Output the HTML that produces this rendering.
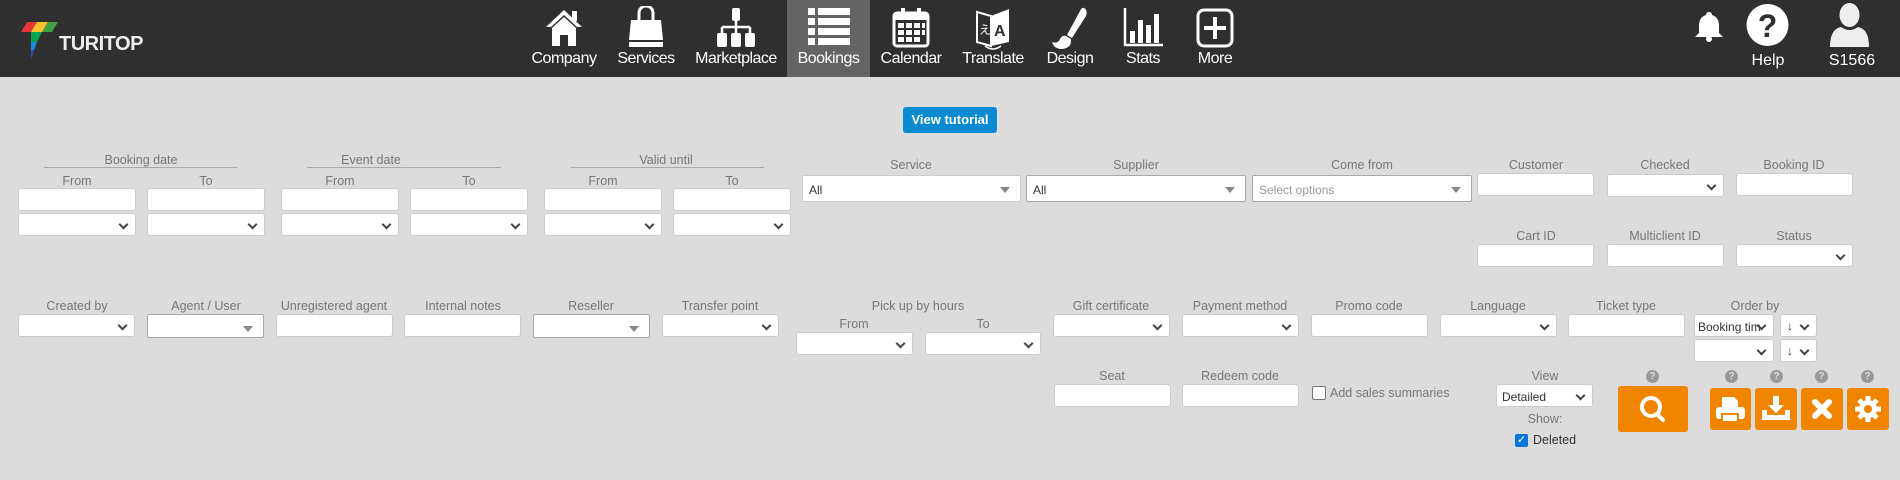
<!DOCTYPE html>
<html><head><meta charset="utf-8"><style>
*{margin:0;padding:0;box-sizing:border-box}
body{width:1900px;height:480px;background:#dcdcdc;font-family:"Liberation Sans",Arial,sans-serif;position:relative;overflow:hidden}
.nav{position:absolute;left:0;top:0;width:1900px;height:77px;background:#2f2f2f}
.ni{position:absolute;top:0;height:77px;color:#fff;font-size:16px;text-align:center}
.ni span{position:absolute;left:0;right:0;top:50px;letter-spacing:-0.5px}
.ni svg{position:absolute;top:6px;left:50%;transform:translateX(-50%)}
.a{position:absolute}
.lb{position:absolute;font-size:12.5px;color:#777;text-align:center;white-space:nowrap;transform:translateX(-50%)}
.in{position:absolute;background:#fff;border:1px solid #ccc;border-radius:3px;height:23px}
.se{position:absolute;background:#fff;border:1px solid #ccc;border-radius:3px;height:23px}
.se:after{content:"";position:absolute;right:8px;top:7px;width:5px;height:5px;border-right:2px solid #444;border-bottom:2px solid #444;transform:rotate(45deg)}
.ch{position:absolute;background:#fff;border:1px solid #aaa;border-radius:2px;height:27px;font-size:12px;color:#333;padding:7px 0 0 6px}
.ch:after{content:"";position:absolute;right:10px;top:11px;border:5px solid transparent;border-top:6px solid #888}
.ob{position:absolute;background:#f28500;border-radius:3px}
.q{position:absolute;width:13px;height:13px;border-radius:50%;background:#999;color:#ddd;font-size:10px;font-weight:bold;text-align:center;line-height:13px}
</style></head><body>
<div class="nav">
 <svg class="a" style="left:21px;top:22px" width="40" height="40" viewBox="0 0 40 40">
  <polygon points="6,0 16,0 10,10 0,10" fill="#e53935"/>
  <polygon points="16,0 27,0 21,10 10,10" fill="#fbc02d"/>
  <polygon points="27,0 37,0 31,10 21,10" fill="#43a047"/>
  <polygon points="10,10 21,10 16,20 10,20" fill="#00a651"/>
  <polygon points="10,20 16,20 13,28 10,28" fill="#1e88e5"/>
  <polygon points="10,28 13,28 10,38" fill="#3949ab"/>
 </svg>
 <div class="a" style="left:59px;top:33px;color:#eee;font-weight:bold;font-size:20px;letter-spacing:-0.5px">TURITOP</div>

 <div class="ni" style="left:527px;width:74px"><svg width="40" height="40" viewBox="0 0 40 40"><path d="M20 4 L2 21 L7 21 L20 9 L33 21 L38 21 Z" fill="#fff"/><rect x="28" y="5" width="5" height="10" fill="#fff"/><path d="M8 22 L20 11 L32 22 L32 40 L24 40 L24 29 L16 29 L16 40 L8 40Z" fill="#fff"/></svg><span>Company</span></div>
 <div class="ni" style="left:612px;width:68px"><svg width="40" height="42" viewBox="0 0 40 42"><path d="M13 14 V7 a7 7 0 0 1 14 0 V14" stroke="#fff" stroke-width="3" fill="none"/><path d="M5 14 H35 L37 34 H3Z" fill="#fff"/><rect x="3" y="36" width="34" height="5" fill="#fff"/></svg><span>Services</span></div>
 <div class="ni" style="left:690px;width:92px"><svg width="40" height="42" viewBox="0 0 40 42"><rect x="16" y="2" width="8" height="13" rx="2" fill="#fff"/><path d="M20 15V21M6 21H34M6 21V27M20 21V27M34 21V27" stroke="#fff" stroke-width="2.5" fill="none"/><rect x="1" y="27" width="10" height="14" rx="2" fill="#fff"/><rect x="15" y="27" width="10" height="14" rx="2" fill="#fff"/><rect x="29" y="27" width="10" height="14" rx="2" fill="#fff"/></svg><span>Marketplace</span></div>
 <div class="ni" style="left:787px;width:83px;background:#646464"><svg width="42" height="40" viewBox="0 0 42 40"><g fill="#fff"><rect x="0" y="2" width="7" height="7"/><rect x="10" y="2" width="32" height="7"/><rect x="0" y="12" width="7" height="7"/><rect x="10" y="12" width="32" height="7"/><rect x="0" y="22" width="7" height="7"/><rect x="10" y="22" width="32" height="7"/><rect x="0" y="32" width="7" height="7"/><rect x="10" y="32" width="32" height="7"/></g></svg><span>Bookings</span></div>
 <div class="ni" style="left:876px;width:70px"><svg width="40" height="42" viewBox="0 0 40 42"><rect x="3" y="7" width="34" height="33" rx="3" fill="none" stroke="#fff" stroke-width="3"/><rect x="3" y="7" width="34" height="7" fill="#fff"/><rect x="10" y="2" width="4" height="9" fill="#fff"/><rect x="26" y="2" width="4" height="9" fill="#fff"/><g fill="#fff"><rect x="7" y="17" width="6" height="5"/><rect x="15" y="17" width="6" height="5"/><rect x="23" y="17" width="6" height="5"/><rect x="31" y="17" width="3" height="5"/><rect x="7" y="24" width="6" height="5"/><rect x="15" y="24" width="6" height="5"/><rect x="23" y="24" width="6" height="5"/><rect x="31" y="24" width="3" height="5"/><rect x="7" y="31" width="6" height="5"/><rect x="15" y="31" width="6" height="5"/><rect x="23" y="31" width="6" height="5"/></g></svg><span>Calendar</span></div>
 <div class="ni" style="left:958px;width:70px"><svg width="40" height="44" viewBox="0 0 40 44"><path d="M4 6 L18 10 L18 40 L4 36Z" fill="none" stroke="#fff" stroke-width="2"/><path d="M18 10 L36 3 L36 36 L18 40Z" fill="#fff"/><text x="6" y="28" fill="#fff" font-size="12" font-family="Liberation Sans">え</text><text x="21" y="30" fill="#2f2f2f" font-size="16" font-weight="bold" font-family="Liberation Sans">A</text><path d="M12 40 Q20 46 28 40" stroke="#fff" stroke-width="1.5" fill="none"/></svg><span>Translate</span></div>
 <div class="ni" style="left:1040px;width:60px"><svg width="40" height="44" viewBox="0 0 40 44"><path d="M34 2 Q38 4 36 10 L22 32 L17 29 L30 5 Q32 1 34 2Z" fill="#fff"/><path d="M16 30 L21 33 Q22 42 12 43 Q4 43 2 36 Q8 38 10 33 Q12 29 16 30Z" fill="#fff"/></svg><span>Design</span></div>
 <div class="ni" style="left:1118px;width:50px"><svg width="40" height="42" viewBox="0 0 40 42"><path d="M2 2V39H40" stroke="#fff" stroke-width="2.5" fill="none"/><g fill="#fff"><rect x="7" y="25" width="5" height="12"/><rect x="15" y="14" width="5" height="23"/><rect x="23" y="19" width="5" height="18"/><rect x="31" y="8" width="5" height="29"/></g></svg><span>Stats</span></div>
 <div class="ni" style="left:1190px;width:50px"><svg width="40" height="42" viewBox="0 0 40 42"><rect x="3" y="4" width="34" height="36" rx="6" fill="none" stroke="#fff" stroke-width="3"/><path d="M20 11V33M9 22H31" stroke="#fff" stroke-width="4"/></svg><span>More</span></div>

 <svg class="a" style="left:1694px;top:11px" width="30" height="31" viewBox="0 0 30 31"><path d="M15 1 Q18 1 18 4 Q25 6 25 15 V22 L29 26 H1 L5 22 V15 Q5 6 12 4 Q12 1 15 1Z" fill="#fff"/><circle cx="15" cy="28" r="3" fill="#fff"/></svg>
 <svg class="a" style="left:1745px;top:3px" width="45" height="44" viewBox="0 0 45 44"><circle cx="22.5" cy="22" r="21" fill="#fff"/><text x="22.5" y="34" text-anchor="middle" fill="#2f2f2f" font-size="32" font-weight="bold" font-family="Liberation Sans">?</text></svg>
 <div class="a" style="left:1746px;top:52px;width:44px;text-align:center;color:#fff;font-size:16px">Help</div>
 <svg class="a" style="left:1829px;top:3px" width="41" height="44" viewBox="0 0 41 44"><ellipse cx="20.5" cy="12" rx="10" ry="12" fill="#eee"/><path d="M1 44 Q1 26 12 24 Q20.5 30 29 24 Q40 26 40 44Z" fill="#eee"/></svg>
 <div class="a" style="left:1822px;top:52px;width:60px;text-align:center;color:#fff;font-size:16px">S1566</div>
</div>

<div class="a" style="left:903px;top:107px;width:94px;height:26px;background:#0a8ad2;border-radius:3px;color:#fff;font-weight:bold;font-size:13px;text-align:center;line-height:26px">View tutorial</div>

<!-- date groups -->
<div class="lb" style="left:141px;top:153px">Booking date</div><div class="a" style="left:44px;top:167px;width:194px;height:1px;background:#aaa"></div>
<div class="lb" style="left:371px;top:153px">Event date</div><div class="a" style="left:307px;top:167px;width:194px;height:1px;background:#aaa"></div>
<div class="lb" style="left:666px;top:153px">Valid until</div><div class="a" style="left:570px;top:167px;width:194px;height:1px;background:#aaa"></div>
<div class="lb" style="left:77px;top:174px">From</div><div class="lb" style="left:206px;top:174px">To</div>
<div class="lb" style="left:340px;top:174px">From</div><div class="lb" style="left:469px;top:174px">To</div>
<div class="lb" style="left:603px;top:174px">From</div><div class="lb" style="left:732px;top:174px">To</div>
<div class="in" style="left:18px;top:188px;width:118px"></div><div class="in" style="left:147px;top:188px;width:118px"></div>
<div class="in" style="left:281px;top:188px;width:118px"></div><div class="in" style="left:410px;top:188px;width:118px"></div>
<div class="in" style="left:544px;top:188px;width:118px"></div><div class="in" style="left:673px;top:188px;width:118px"></div>
<div class="se" style="left:18px;top:213px;width:118px"></div><div class="se" style="left:147px;top:213px;width:118px"></div>
<div class="se" style="left:281px;top:213px;width:118px"></div><div class="se" style="left:410px;top:213px;width:118px"></div>
<div class="se" style="left:544px;top:213px;width:118px"></div><div class="se" style="left:673px;top:213px;width:118px"></div>

<div class="lb" style="left:911px;top:158px">Service</div>
<div class="lb" style="left:1136px;top:158px">Supplier</div>
<div class="lb" style="left:1362px;top:158px">Come from</div>
<div class="lb" style="left:1536px;top:158px">Customer</div>
<div class="lb" style="left:1665px;top:158px">Checked</div>
<div class="lb" style="left:1794px;top:158px">Booking ID</div>
<div class="ch" style="left:802px;top:175px;width:219px;border-color:#ccc">All</div>
<div class="ch" style="left:1026px;top:175px;width:220px">All</div>
<div class="ch" style="left:1252px;top:175px;width:220px;color:#999">Select options</div>
<div class="in" style="left:1477px;top:173px;width:117px"></div>
<div class="se" style="left:1607px;top:174px;width:117px"></div>
<div class="in" style="left:1736px;top:173px;width:117px"></div>

<div class="lb" style="left:1536px;top:229px">Cart ID</div>
<div class="lb" style="left:1665px;top:229px">Multiclient ID</div>
<div class="lb" style="left:1794px;top:229px">Status</div>
<div class="in" style="left:1477px;top:244px;width:117px"></div>
<div class="in" style="left:1607px;top:244px;width:117px"></div>
<div class="se" style="left:1736px;top:244px;width:117px"></div>

<div class="lb" style="left:77px;top:299px">Created by</div>
<div class="lb" style="left:206px;top:299px">Agent / User</div>
<div class="lb" style="left:334px;top:299px">Unregistered agent</div>
<div class="lb" style="left:463px;top:299px">Internal notes</div>
<div class="lb" style="left:591px;top:299px">Reseller</div>
<div class="lb" style="left:720px;top:299px">Transfer point</div>
<div class="se" style="left:18px;top:314px;width:117px"></div>
<div class="ch" style="left:147px;top:314px;width:117px;height:24px"></div>
<div class="in" style="left:276px;top:314px;width:117px"></div>
<div class="in" style="left:404px;top:314px;width:117px"></div>
<div class="ch" style="left:533px;top:314px;width:117px;height:24px"></div>
<div class="se" style="left:662px;top:314px;width:117px"></div>
<div class="lb" style="left:918px;top:299px">Pick up by hours</div>
<div class="lb" style="left:854px;top:317px">From</div><div class="lb" style="left:983px;top:317px">To</div>
<div class="se" style="left:796px;top:332px;width:117px"></div>
<div class="se" style="left:925px;top:332px;width:116px"></div>

<div class="lb" style="left:1111px;top:299px">Gift certificate</div>
<div class="lb" style="left:1240px;top:299px">Payment method</div>
<div class="lb" style="left:1369px;top:299px">Promo code</div>
<div class="lb" style="left:1498px;top:299px">Language</div>
<div class="lb" style="left:1626px;top:299px">Ticket type</div>
<div class="lb" style="left:1755px;top:299px">Order by</div>
<div class="se" style="left:1053px;top:314px;width:117px"></div>
<div class="se" style="left:1182px;top:314px;width:117px"></div>
<div class="in" style="left:1311px;top:314px;width:117px"></div>
<div class="se" style="left:1440px;top:314px;width:117px"></div>
<div class="in" style="left:1568px;top:314px;width:117px"></div>
<div class="se" style="left:1694px;top:314px;width:80px;font-size:12px;color:#333;padding:5px 0 0 3px;overflow:hidden;white-space:nowrap">Booking tim</div>
<div class="se" style="left:1780px;top:314px;width:37px;font-size:12px;color:#333;padding:4px 0 0 6px">↓</div>
<div class="se" style="left:1694px;top:339px;width:80px"></div>
<div class="se" style="left:1780px;top:339px;width:37px;font-size:12px;color:#333;padding:4px 0 0 6px">↓</div>

<div class="lb" style="left:1112px;top:369px">Seat</div>
<div class="lb" style="left:1240px;top:369px">Redeem code</div>
<div class="in" style="left:1054px;top:384px;width:117px"></div>
<div class="in" style="left:1182px;top:384px;width:117px"></div>
<div class="a" style="left:1312px;top:386px;width:14px;height:14px;background:#fff;border:1px solid #777;border-radius:2px"></div>
<div class="a" style="left:1330px;top:386px;font-size:12.5px;color:#777">Add sales summaries</div>
<div class="lb" style="left:1545px;top:369px">View</div>
<div class="se" style="left:1496px;top:384px;width:97px;font-size:12px;color:#333;padding:5px 0 0 5px">Detailed</div>
<div class="lb" style="left:1545px;top:412px">Show:</div>
<div class="a" style="left:1515px;top:434px;width:13px;height:13px;background:#0a75d8;border-radius:2px;color:#fff;font-size:11px;line-height:13px;text-align:center">✓</div>
<div class="a" style="left:1533px;top:433px;font-size:12.5px;color:#333">Deleted</div>

<div class="q" style="left:1646px;top:370px">?</div>
<div class="q" style="left:1725px;top:370px">?</div>
<div class="q" style="left:1770px;top:370px">?</div>
<div class="q" style="left:1815px;top:370px">?</div>
<div class="q" style="left:1861px;top:370px">?</div>
<div class="ob" style="left:1618px;top:386px;width:70px;height:46px"><svg width="70" height="46" viewBox="0 0 70 46"><circle cx="33" cy="21" r="9" stroke="#fff" stroke-width="4" fill="none"/><path d="M39 28L45 34" stroke="#fff" stroke-width="4" stroke-linecap="round"/></svg></div>
<div class="ob" style="left:1710px;top:388px;width:41px;height:42px"><svg width="41" height="42" viewBox="0 0 41 42"><path d="M12 9H24L28 13V19H12Z" fill="#fff"/><rect x="6" y="19" width="29" height="12" rx="3" fill="#fff"/><rect x="12" y="26" width="16" height="8" fill="#fff" stroke="#f28500" stroke-width="2"/></svg></div>
<div class="ob" style="left:1755px;top:388px;width:42px;height:42px"><svg width="42" height="42" viewBox="0 0 42 42"><path d="M18 8H24V17H29L21 25L13 17H18Z" fill="#fff"/><path d="M7 22H12V27H30V22H35V32H7Z" fill="#fff"/></svg></div>
<div class="ob" style="left:1801px;top:388px;width:42px;height:42px"><svg width="42" height="42" viewBox="0 0 42 42"><path d="M14 14L28 28M28 14L14 28" stroke="#fff" stroke-width="6" stroke-linecap="round"/></svg></div>
<div class="ob" style="left:1847px;top:388px;width:42px;height:42px"><svg width="42" height="42" viewBox="0 0 42 42"><g fill="#fff"><circle cx="21" cy="21" r="9"/><g stroke="#fff" stroke-width="5"><path d="M21 8V34M8 21H34M12 12L30 30M30 12L12 30"/></g></g><circle cx="21" cy="21" r="4" fill="#f28500"/></svg></div>
</body></html>
